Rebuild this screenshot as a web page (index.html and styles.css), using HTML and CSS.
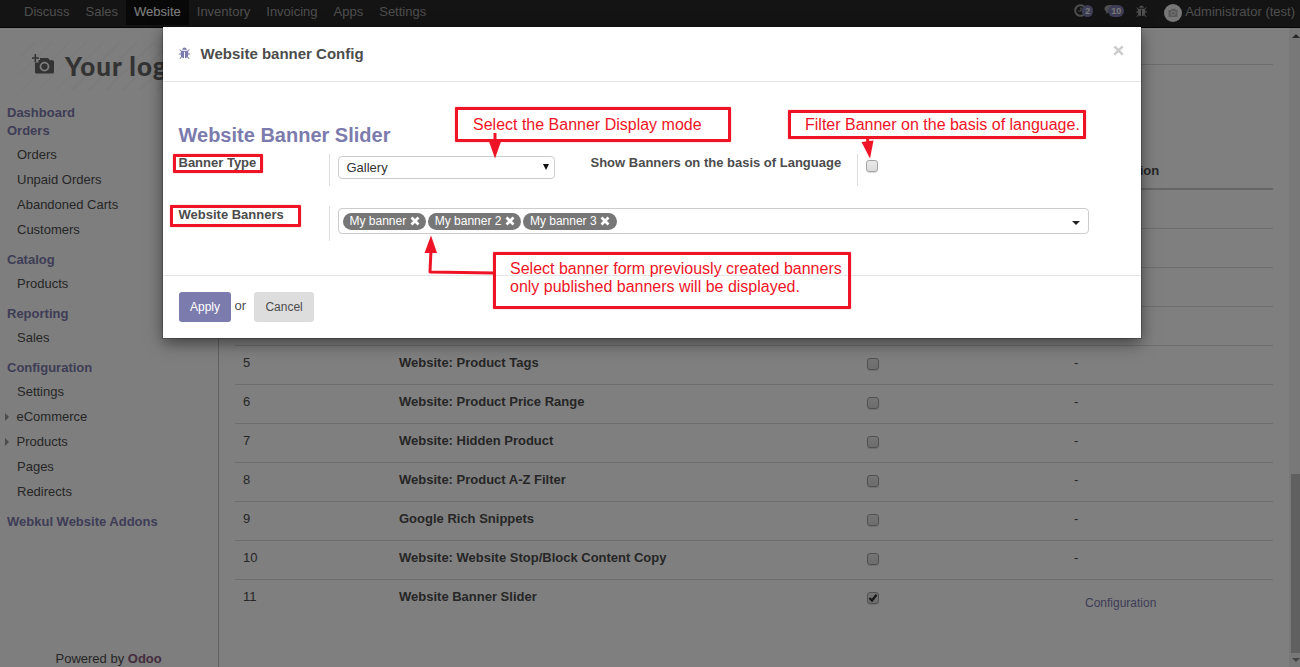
FILE: index.html
```html
<!DOCTYPE html>
<html lang="en">
<head>
<meta charset="utf-8">
<title>Website banner Config</title>
<link rel="stylesheet" href="styles.css">
</head>
<body>
<svg class="defs" width="0" height="0">
  <symbol id="bug" viewBox="0 0 1792 1792"><path d="M1696 960q0 26-19 45t-45 19h-224q0 171-67 290l208 209q19 19 19 45t-19 45q-18 19-45 19t-45-19l-198-197q-5 5-15 13t-42 28.500-65 36.500-82 29-97 13v-896h-128v896q-51 0-101.500-13.500t-87-33-66-39-43.500-32.500l-15-14-183 207q-20 21-48 21-24 0-43-16-19-18-20.500-44.500t15.500-46.500l202-227q-58-114-58-274h-224q-26 0-45-19t-19-45 19-45 45-19h224v-294l-173-173q-19-19-19-45t19-45 45-19 45 19l173 173h844l173-173q19-19 45-19t45 19 19 45-19 45l-173 173v294h224q26 0 45 19t19 45zm-480-576h-640q0-133 93.500-226.500t226.500-93.500 226.500 93.500 93.500 226.500z"/></symbol>
  <symbol id="times" viewBox="0 0 10 10"><path d="M1.500 1.500L8.500 8.500M8.500 1.500L1.500 8.500" fill="none" stroke="currentColor" stroke-width="2.700"/></symbol>
</svg>

<div class="app">
  <nav class="topbar">
    <div class="menu">
      <a>Discuss</a><a>Sales</a><a class="active">Website</a><a>Inventory</a><a>Invoicing</a><a>Apps</a><a>Settings</a>
    </div>
    <div class="systray">
      <span class="tray clock"><svg width="13" height="13" viewBox="0 0 13 13"><circle cx="6.500" cy="6.500" r="5.300" fill="none" stroke="currentColor" stroke-width="2"/><path d="M7 3.500V7H4.300" fill="none" stroke="currentColor" stroke-width="1.200"/></svg><b>2</b></span>
      <span class="tray chat"><svg width="15" height="13" viewBox="0 0 15 13"><path d="M6 1C2.800 1 .5 2.600.5 4.800c0 1.300.8 2.400 2.100 3.100-.2.700-.6 1.300-1.100 1.800 1.300-.1 2.400-.6 3.200-1.200C8.500 8.800 11.500 7.200 11.500 4.800 11.500 2.600 9.200 1 6 1z" fill="currentColor"/><path d="M12.500 4c2 1.800 2 4.600.2 5.800.2.700.6 1.200 1 1.700-1.300-.1-2.300-.5-3.200-1.200-1.600.2-3.300-.1-4.400-.9C9.500 9.300 12.300 7.400 12.500 4z" fill="currentColor"/></svg><b>10</b></span>
      <svg class="traybug" width="13" height="13"><use href="#bug"/></svg>
      <span class="avatar"><svg width="18" height="18" viewBox="0 0 18 18"><path d="M5 6h2l1-1.300h3L12 6h1.500v7h-9V6z" fill="#b5b5b5"/><circle cx="9.200" cy="9.300" r="2.100" fill="none" stroke="#eee"/></svg></span>
      <span class="user">Administrator (test)</span>
    </div>
  </nav>

  <div class="content">
    <aside class="sidebar">
      <div class="logo">
        <svg width="24" height="22" viewBox="0 0 24 22"><path d="M9 5h8l2 2.200h2.500a1.500 1.500 0 0 1 1.500 1.500V19a1.500 1.500 0 0 1-1.500 1.500h-16A1.500 1.500 0 0 1 4 19V9.500h3.500V7H9z" fill="#666"/><path d="M4.300 1v8M1 5h7" stroke="#666" stroke-width="1.600"/><circle cx="13.500" cy="13.600" r="4" fill="none" stroke="#fafafa" stroke-width="1.800"/></svg>
        <span>Your logo</span>
      </div>
      <h4>Dashboard</h4>
      <h4>Orders</h4>
      <ul><li>Orders</li><li>Unpaid Orders</li><li>Abandoned Carts</li><li>Customers</li></ul>
      <h4>Catalog</h4>
      <ul><li>Products</li></ul>
      <h4>Reporting</h4>
      <ul><li>Sales</li></ul>
      <h4>Configuration</h4>
      <ul><li>Settings</li><li class="sub">eCommerce</li><li class="sub">Products</li><li>Pages</li><li>Redirects</li></ul>
      <h4>Webkul Website Addons</h4>
      <div class="powered">Powered by <b>Odoo</b></div>
    </aside>

    <main class="main">
      <div class="rule"></div>
      <div class="row head"><span></span><span></span><span></span><b>Configuration</b></div>
      <div class="row"></div>
      <div class="row"></div>
      <div class="row"></div>
      <div class="row"></div>
      <div class="row"><span>5</span><b>Website: Product Tags</b><i class="check"></i><span>-</span></div>
      <div class="row"><span>6</span><b>Website: Product Price Range</b><i class="check"></i><span>-</span></div>
      <div class="row"><span>7</span><b>Website: Hidden Product</b><i class="check"></i><span>-</span></div>
      <div class="row"><span>8</span><b>Website: Product A-Z Filter</b><i class="check"></i><span>-</span></div>
      <div class="row"><span>9</span><b>Google Rich Snippets</b><i class="check"></i><span>-</span></div>
      <div class="row"><span>10</span><b>Website: Website Stop/Block Content Copy</b><i class="check"></i><span>-</span></div>
      <div class="row"><span>11</span><b>Website Banner Slider</b><i class="check"><svg width="10" height="10" viewBox="0 0 10 10"><path d="M1.500 5L4 7.500L8.500 1.800" fill="none" stroke="#333" stroke-width="2.400"/></svg></i><a class="config">Configuration</a></div>
    </main>
    <div class="scroll"><i class="up"></i><i class="thumb"></i><i class="down"></i></div>
  </div>
</div>

<div class="backdrop">
  <section class="modal">
    <header>
      <svg class="headbug" width="13" height="13"><use href="#bug"/></svg>
      <h3>Website banner Config</h3>
      <svg class="close" width="11" height="11" viewBox="0 0 11 11"><path d="M1.300 1.300L9.700 9.700M9.700 1.300L1.300 9.700" stroke="#ccc" stroke-width="2.500"/></svg>
    </header>
    <div class="form">
      <h2>Website Banner Slider</h2>
      <div class="fields first">
        <label>Banner Type</label>
        <div class="cell"><div class="select"><span>Gallery</span><svg width="6" height="6"><path d="M0 0h6L3 6z" fill="#111"/></svg></div></div>
        <label class="lang">Show Banners on the basis of Language</label>
        <div class="cell"><i class="check"></i></div>
      </div>
      <div class="fields second">
        <label>Website Banners</label>
        <div class="cell"><div class="tags">
          <span class="tag">My banner <svg width="10" height="10"><use href="#times"/></svg></span>
          <span class="tag">My banner 2 <svg width="10" height="10"><use href="#times"/></svg></span>
          <span class="tag">My banner 3 <svg width="10" height="10"><use href="#times"/></svg></span>
          <svg class="caret" width="8" height="4"><path d="M0 0h8L4 4z" fill="#222"/></svg>
        </div></div>
      </div>
    </div>
    <footer><button class="apply">Apply</button><span>or</span><button class="cancel">Cancel</button></footer>
  </section>
</div>

<div class="note type-mark"></div>
<div class="note banners-mark"></div>
<div class="note mode">Select the Banner Display mode</div>
<div class="note filter">Filter Banner on the basis of language.</div>
<div class="note select-note">Select banner form previously created banners<br>only published banners will be displayed.</div>
<svg class="arrows" width="1300" height="667" viewBox="0 0 1300 667">
  <g fill="none" stroke="#ee1426" stroke-width="3"><path d="M495 133V144"/><path d="M867.500 138L868 144"/><path d="M494 273L430 272L431 250" stroke-linejoin="round"/></g>
  <g fill="#ee1426"><path d="M489 141.500H501L495 158.500z"/><path d="M861.500 142L873.500 140.500L870 158.500z"/><path d="M424.500 253H437L431 235.500z"/></g>
</svg>
</body>
</html>
```

FILE: styles.css
```css
* { box-sizing: border-box; }
body { margin: 0; width: 1300px; height: 667px; overflow: hidden; position: relative; font: 13px/18px "Liberation Sans", Arial, sans-serif; color: #4c4c4c; background: #fff; }
h2, h3, h4, ul { margin: 0; padding: 0; list-style: none; }
.defs { position: absolute; }
svg { fill: currentColor; flex: none; }

.app { height: 667px; display: flex; flex-direction: column; }
.topbar { height: 28px; background: #282828; border-bottom: 1px solid #080808; display: flex; justify-content: space-between; color: #9d9d9d; }
.menu { display: flex; padding-left: 16px; }
.menu a { height: 25px; padding: 3px 8px 0; }
.menu .active { background: #101010; color: #fff; }
.systray { display: flex; padding-right: 5px; }
.tray { display: flex; padding-top: 4px; }
.tray b { font-size: 9px; line-height: 12px; height: 12px; padding: 0 3px; border-radius: 6px; background: #7c7bad; color: #eee; margin: 1px 0 0 -5px; position: relative; }
.chat { margin-left: 11px; }
.chat b { margin-left: -11px; }
.traybug { margin: 5px 0 0 11px; }
.avatar { width: 18px; height: 18px; margin: 4px 3px 0 16px; border-radius: 50%; background: #eee; }
.user { padding-top: 3px; }

.content { flex: 1; display: flex; }
.sidebar { width: 219px; border-right: 1px solid #c4c4c4; background: #fcfcfc; display: flex; flex-direction: column; padding-left: 7px; }
.logo { height: 48px; margin: 14px 10px 14px 13px; padding: 11px 0 0 11px; display: flex; overflow: hidden; background: repeating-linear-gradient(135deg, #fcfcfc 0 10px, #f7f7f7 10px 12px); }
.logo span { font: 900 26px/26px Lato, sans-serif; letter-spacing: 1px; color: #666; margin-left: 10px; white-space: nowrap; }
.sidebar h4 { font-size: 13px; line-height: 18px; color: #7c7bad; }
.sidebar ul { padding: 2px 0 9px 10px; }
.sidebar li { height: 25px; line-height: 25px; }
.sub { display: flex; align-items: center; margin-left: -12px; }
.sub::before { content: ""; border: 4px solid transparent; border-left-color: #999; border-right: 0; margin-right: 7.500px; }
.powered { margin: auto 0 0 48.500px; height: 17px; }
.powered b { color: #875a7b; }

.main { width: 1070px; padding: 0 16px; }
.rule { height: 37px; border-bottom: 1px solid #ddd; }
.row { display: grid; grid-template-columns: 156px 468px 207px 1fr; height: 39px; padding: 8px 8px 0; border-bottom: 1px solid #ddd; }
.row.head { height: 125px; padding-top: 97px; border-bottom: 2px solid #ccc; }
.row:last-child { border: 0; }
.check { display: block; width: 12px; height: 12px; border: 1px solid #a3a3a3; border-radius: 3px; background: linear-gradient(#eaeaea, #dadada); box-shadow: 0 1px 1px #ddd; }
.row .check { margin-top: 4px; }
.check svg { display: block; }
.config { font-size: 12px; color: #7c7bad; padding: 6px 0 0 11px; }
.scroll { width: 11px; padding: 6px 0 5px 2px; background: #f1f1f1; display: flex; flex-direction: column; align-items: center; }
.up, .down { border: 4px solid transparent; }
.up { border-bottom-color: #505050; border-top: 0; }
.down { border-top-color: #888; border-bottom: 0; }
.thumb { width: 9px; height: 179px; background: #c1c1c1; margin: auto 0 5px; }

.backdrop { position: absolute; inset: 0; background: rgba(0, 0, 0, .5); padding: 27px 159px 0 163px; }
.modal { height: 311px; background: #fff; box-shadow: 0 5px 15px rgba(0, 0, 0, .5), 0 0 0 1px rgba(0, 0, 0, .2); display: flex; flex-direction: column; }
.modal header { height: 55px; border-bottom: 1px solid #e5e5e5; display: flex; padding: 18px 17px 0 15px; color: #7c7bad; }
.headbug { margin-top: 2px; }
.modal h3 { font-size: 15px; line-height: 17px; color: #4c4c4c; margin-left: 9.500px; }
.close { margin-left: auto; }
.form { height: 193px; padding: 42px 0 0 15px; }
.form h2 { font-size: 20px; line-height: 23px; color: #7c7bad; padding-left: .5px; }
.fields { display: grid; font-weight: bold; }
.fields label { padding-left: .5px; }
.fields .cell { border-left: 1px solid #ddd; padding-left: 8px; font-weight: normal; }
.first { grid-template-columns: 151px 261px 267px 1fr; height: 32px; margin-top: 7px; }
.first .cell { padding-top: 2px; }
.first .check { margin-top: 4px; }
.second { grid-template-columns: 151px 1fr; height: 35px; margin-top: 20px; }
.second .cell { padding-top: 2px; }
.select { width: 217px; height: 23px; border: 1px solid #ccc; border-radius: 4px; display: flex; align-items: center; justify-content: space-between; padding: 0 5px 0 7.500px; color: #333; }
.select svg { margin-top: -2px; }
.tags { width: 751px; height: 26px; border: 1px solid #ccc; border-radius: 4px; display: flex; padding: 4px 8px 0 4px; }
.tag { height: 17px; padding: 0 6.500px 0 6.500px; margin-right: 2px; border-radius: 9px; background: #777; color: #fff; font-size: 12px; line-height: 17px; display: flex; gap: 3.500px; }
.tag svg { margin-top: 3px; }
.caret { margin: 8px 0 0 auto; }
.modal footer { height: 63px; border-top: 1px solid #e5e5e5; display: flex; padding: 16px; }
.modal footer span { line-height: 27px; margin: 0 8px 0 3.500px; }
button { height: 30px; padding: 0; border: 0; border-radius: 3px; font: 12px "Liberation Sans", Arial, sans-serif; }
.apply { width: 52px; background: #7c7bad; color: #fff; }
.cancel { width: 60px; background: #ddd; color: #4c4c4c; }

/* Annotation callouts drawn over the dialog */
.note { position: absolute; border: 3px solid #ee1426; border-radius: 1px; color: #ee1426; font-size: 16px; line-height: 18px; white-space: nowrap; box-shadow: 0 0 1px #ee1426; }
.type-mark { left: 173px; top: 154px; width: 90px; height: 19px; }
.banners-mark { left: 170px; top: 205px; width: 131px; height: 22px; }
.mode { left: 455px; top: 107px; width: 276px; height: 35px; padding: 6px 0 0 15px; }
.filter { left: 788px; top: 110px; width: 298px; height: 29px; padding: 3px 0 0 14px; }
.select-note { left: 493px; top: 252px; width: 358px; height: 57px; padding: 5px 0 0 14px; }
.arrows { position: absolute; left: 0; top: 0; }
```
